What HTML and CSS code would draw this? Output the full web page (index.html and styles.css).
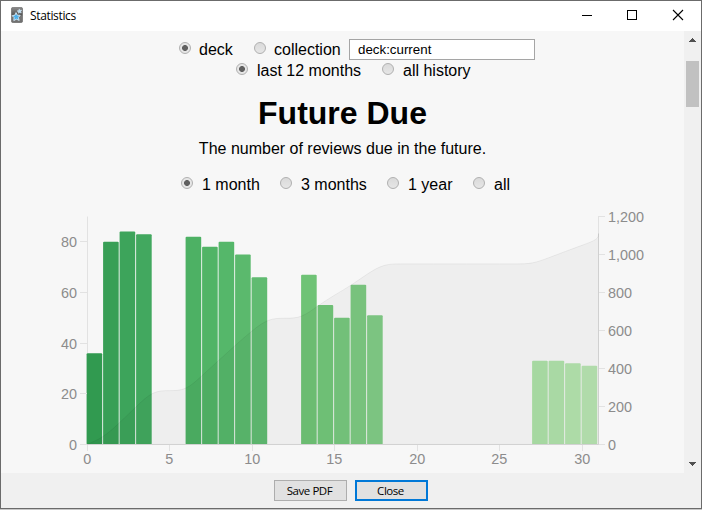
FILE: index.html
```html
<!DOCTYPE html>
<html lang="en">
<head>
<meta charset="utf-8">
<title>Statistics</title>
<link rel="stylesheet" href="styles.css">
</head>
<body>
<div class="window">
  <header class="titlebar">
    <svg class="app-icon" width="12" height="16" viewBox="0 0 12 16">
      <defs><linearGradient id="card" x1="0" y1="0" x2="0" y2="1"><stop offset="0" stop-color="#8c8c8c"/><stop offset="0.5" stop-color="#555"/><stop offset="0.55" stop-color="#777"/><stop offset="1" stop-color="#707070"/></linearGradient></defs>
      <rect x="0.3" y="0.3" width="11.4" height="15.4" rx="2" fill="url(#card)" stroke="#666" stroke-width="0.6"/>
      <path d="M5 5.6 6.3 8.2 9.2 8.3 7.4 10.5 8.2 13.4 5.4 12.2 2.8 13.6 3.1 10.6 1.2 8.7 4 8.1Z" fill="#4db1ec" stroke="#e4f3fc" stroke-width="0.8"/>
      <path d="M8.3 1.9 9 3.3 10.8 3.1 9.8 4.5 10.3 6 8.7 5.5 7.4 6.3 7.3 4.8 6 3.9 7.6 3.4Z" fill="#b9def5" stroke="#e4f3fc" stroke-width="0.4"/>
    </svg>
    <span class="caption">Statistics</span>
    <svg class="controls" width="120" height="30" viewBox="0 0 120 30" fill="none" stroke="#000" shape-rendering="crispEdges">
      <path d="M1 14.500H11M46.500 9.500H55.500V18.500H46.500Z"/>
      <path d="M92 9 102 19M102 9 92 19" shape-rendering="auto" stroke-width="1.100"/>
    </svg>
  </header>
  <div class="viewport">
    <main class="page">
      <div class="row scope">
        <label><input type="radio" name="scope" checked>deck</label>
        <label><input type="radio" name="scope">collection</label>
        <input class="search" type="text" value="deck:current">
      </div>
      <div class="row period">
        <label><input type="radio" name="period" checked>last 12 months</label>
        <label><input type="radio" name="period">all history</label>
      </div>
      <h1>Future Due</h1>
      <p class="subtitle">The number of reviews due in the future.</p>
      <div class="row range">
        <label><input type="radio" name="range" checked>1 month</label>
        <label><input type="radio" name="range">3 months</label>
        <label><input type="radio" name="range">1 year</label>
        <label><input type="radio" name="range">all</label>
      </div>
      <svg class="chart" id="chart" width="683" height="268" viewBox="1 205 683 268"></svg>
    </main>
    <div class="scrollbar">
      <svg width="17" height="30" viewBox="0 0 17 30" shape-rendering="crispEdges"><path d="M8 7h1v1h1v1h1v1h1v1H5v-1h1V9h1V8h1z" fill="#505050"/></svg>
      <div class="thumb"></div>
      <svg class="down" width="17" height="17" viewBox="0 0 17 17" shape-rendering="crispEdges"><path d="M5 6h7v1h-1v1h-1v1H9v1H8V9H7V8H6V7H5z" fill="#505050"/></svg>
    </div>
  </div>
  <footer class="footer">
    <button>Save PDF</button>
    <button class="primary">Close</button>
  </footer>
</div>
<script src="chart.js"></script>
</body>
</html>
```
FILE: styles.css
```css
* { box-sizing: border-box; }
body { margin: 0; background: #c8c8c8; font-family: "Liberation Sans", Arial, sans-serif; overflow: hidden; }
.window { width: 702px; height: 509px; border: 1px solid #6b6b6b; display: flex; flex-direction: column; background: #f0f0f0; }
.titlebar { height: 30px; flex: none; background: #fff; display: flex; align-items: center; padding-left: 10px; }
.app-icon { margin-top: -2px; }
.caption { margin-left: 7px; font: 12px/16px "Open Sans", sans-serif; letter-spacing: -0.35px; color: #000; }
.controls { margin-left: auto; margin-right: 0; }
.viewport { height: 442px; flex: none; display: flex; }
.page { width: 683px; background: #f7f7f7; padding-top: 8px; font-size: 16px; color: #000; overflow: hidden; }
.row { display: grid; height: 21px; line-height: 21px; }
.row label { display: flex; white-space: nowrap; }
.scope { grid-template-columns: 75px 95px 186px; padding-left: 178px; }
.period { grid-template-columns: 146px 100px; padding-left: 235px; }
.range { grid-template-columns: 99px 107px 86px 60px; padding-left: 180px; margin-top: 15px; }
.period input[type="radio"], .range input[type="radio"] { margin-right: 9px; }
input[type="radio"] { appearance: none; flex: none; width: 12px; height: 12px; margin: 3px 8px 0 0; border: 1px solid #b0b0b0; border-radius: 50%; background: linear-gradient(#dadada, #e6e6e6); }
input[type="radio"]:checked { background: radial-gradient(circle, #606060 0 2.6px, #e6e6e6 3.3px); }
.search { width: 186px; height: 21px; margin: 0; border: 1px solid #a5a5a5; border-radius: 0; background: #fff; padding: 1px 8px; font: 13.333px "Liberation Sans", Arial, sans-serif; color: #000; }
h1 { margin: 14px 0 0; height: 37px; font-size: 32px; line-height: 37px; text-align: center; }
.subtitle { margin: 7px 0 0; height: 19px; line-height: 19px; text-align: center; }
.range { margin-top: 16px; }
.chart { display: block; margin-top: 10px; }
.axis { stroke: #e2e2e2; fill: none; }
.tick-text { fill: #8c8c8c; font-size: 14.4px; }
.end { text-anchor: end; }
.mid { text-anchor: middle; }
.area { fill: #000; fill-opacity: 0.036; stroke: #000; stroke-opacity: 0.06; }
.scrollbar { width: 17px; background: #f0f0f0; display: flex; flex-direction: column; }
.scrollbar svg { display: block; flex: none; }
.thumb { width: 13px; height: 46px; margin-left: 2px; background: #c1c1c1; }
.scrollbar .down { margin-top: auto; }
.footer { flex: 1; display: flex; gap: 8px; padding: 7px 0 0 273px; }
.footer button { width: 73px; height: 21px; padding: 0 2px 0 0; border: 1px solid #adadad; background: #e1e1e1; font: 11.5px/17px "Open Sans", sans-serif; letter-spacing: -0.45px; color: #000; }
.footer .primary { border: 2px solid #0078d7; }
```
FILE: chart.js
```javascript
const svg = document.getElementById("chart");
const NS = "http://www.w3.org/2000/svg";

function add(name, attrs, text) {
  const node = document.createElementNS(NS, name);
  for (const key in attrs) node.setAttribute(key, attrs[key]);
  if (text !== undefined) node.textContent = text;
  svg.appendChild(node);
}

const x = day => 87 + day * 16.5;
const yLeft = count => 444.4 - count * 228 / 90;
const yRight = total => 444.4 - total * 0.19;

const due = {
  0: [36, "#319a50"], 1: [80, "#389f56"], 2: [84, "#3da45b"], 3: [83, "#42a85f"],
  6: [82, "#4db164"], 7: [78, "#51b466"], 8: [80, "#55b76a"], 9: [75, "#5bb96d"],
  10: [66, "#60bb71"], 13: [67, "#6fc376"], 14: [55, "#73c67a"], 15: [50, "#77c87e"],
  16: [63, "#7dca82"], 17: [51, "#81cc86"], 27: [33, "#ade0a7"], 28: [33, "#b0e1aa"],
  29: [32, "#b4e3ae"], 30: [31, "#b7e4b1"]
};

for (const day in due) {
  const [count, color] = due[day];
  add("rect", { x: x(+day) - 0.4, y: yLeft(count), width: 15.6, height: yRight(0) - yLeft(count), rx: 1, fill: color });
}

// Axes
add("path", { class: "axis", d: "M81 444.5H605M87.5 216.5V353M598.5 216.5V444.5M598.5 216.5H605" });
for (let v = 0; v <= 80; v += 20) {
  const y = Math.floor(yLeft(v)) + 0.5;
  add("path", { class: "axis", d: `M80 ${y}H87` });
  add("text", { class: "tick-text end", x: 77, y: y + 5 }, v);
}
for (let v = 0; v <= 1200; v += 200) {
  const y = Math.floor(yRight(v)) + 0.5;
  add("path", { class: "axis", d: `M598 ${y}H605` });
  add("text", { class: "tick-text", x: 608, y: y + 5 }, v.toLocaleString("en-US"));
}
for (let v = 0; v <= 30; v += 5) {
  const tx = Math.floor(x(v)) + 0.5;
  add("path", { class: "axis", d: `M${tx} 444V451` });
  add("text", { class: "tick-text mid", x: tx - 0.3, y: 464 }, v);
}

// Running total drawn as a B-spline
let total = 0;
const points = [[x(0), yRight(0)]];
for (let day = 0; day < 31; day++) {
  total += due[day] ? due[day][0] : 0;
  points.push([x(day + 1), yRight(total)]);
}
points.push([x(31), yRight(total + 31)]);

const mix = (a, b, t) => [a[0] + (b[0] - a[0]) * t, a[1] + (b[1] - a[1]) * t];
let d = `M${points[0]}`;
for (let i = 0; i < points.length - 1; i++) {
  const a = points[i], b = points[i + 1], c = points[i + 2];
  const c1 = mix(a, b, 1 / 3), c2 = mix(a, b, 2 / 3);
  const end = c ? mix(c2, mix(b, c, 1 / 3), 0.5) : b;
  d += `C${c1} ${c2} ${end}`;
}
d += `V${yRight(0)}H${x(0)}Z`;
add("path", { class: "area", d });
```
